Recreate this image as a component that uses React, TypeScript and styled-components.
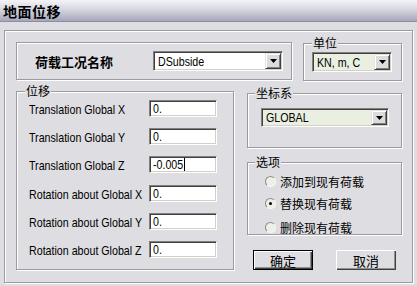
import React from "react";
import styled, { createGlobalStyle, css } from "styled-components";

const BG = "#dedee2";
const SANS = `"Liberation Sans", Arial, sans-serif`;
const CJK = `"Noto Sans CJK SC", "Liberation Sans", sans-serif`;

const Global = createGlobalStyle`
  html, body { margin: 0; padding: 0; background: ${BG}; }
  body { width: 417px; height: 286px; overflow: hidden; }
  #root { width: 417px; height: 286px; }
`;

const etched = css`
  box-sizing: border-box;
  border: 1px solid #9a9aa2;
  box-shadow: inset 1px 1px 0 #ffffff, 1px 1px 0 #ffffff;
`;

const Window = styled.div`
  width: 417px;
  height: 286px;
  background: ${BG};
  display: flex;
  flex-direction: column;
`;

const TitleBar = styled.div`
  height: 21px;
  border-bottom: 1px solid #8e8ea2;
  background: linear-gradient(#f4f4f8 0%, #d6d6e0 45%, #a6a6ba 100%);
  display: flex;
  align-items: center;
  padding-left: 3px;
  font-family: ${CJK};
  font-weight: 700;
  font-size: 14px;
  letter-spacing: 0.5px;
  color: #000;
`;

const Frame = styled.div`
  ${etched};
  margin: 8px 4px 0 4px;
  height: 253px;
  padding: 11px 10px 0 11px;
  display: flex;
  flex-direction: column;
`;

const TopRow = styled.div`
  display: flex;
  gap: 11px;
`;

const Box = styled.div<{ $w?: number; $h: number; $mt?: number }>`
  ${etched};
  position: relative;
  width: ${(p) => (p.$w ? `${p.$w}px` : "auto")};
  flex: ${(p) => (p.$w ? "none" : "1")};
  height: ${(p) => p.$h}px;
  margin-top: ${(p) => p.$mt ?? 0}px;
`;

const Legend = styled.span<{ $left?: number }>`
  position: absolute;
  top: -8px;
  left: ${(p) => p.$left ?? 7}px;
  padding: 0 1px;
  background: ${BG};
  font-family: ${CJK};
  font-size: 12px;
  line-height: 14px;
  color: #000;
`;

const CaseBox = styled(Box)`
  display: flex;
  align-items: center;
  padding: 0 8px 0 18px;
`;

const CaseLabel = styled.span`
  font-family: ${CJK};
  font-weight: 700;
  font-size: 13px;
  color: #000;
`;

/* Condensed Latin text (the dialog uses a narrow sans) */
const Narrow = styled.span`
  display: inline-block;
  font-family: ${SANS};
  font-size: 13px;
  line-height: 15px;
  color: #000;
  white-space: nowrap;
  transform: scaleX(0.82);
  transform-origin: 0 50%;
`;

const Select = styled.div<{ $w: number; $h: number; $bg: string; $ml?: string }>`
  box-sizing: border-box;
  width: ${(p) => p.$w}px;
  height: ${(p) => p.$h}px;
  margin-left: ${(p) => p.$ml ?? "0"};
  display: flex;
  align-items: center;
  padding: 1px;
  background: ${(p) => p.$bg};
  border: 1px solid;
  border-color: #808080 #ffffff #ffffff #808080;
  box-shadow: inset 1px 1px 0 #404040, inset -1px -1px 0 #d4d0c8;
`;

const SelectText = styled.span`
  flex: 1;
  min-width: 0;
  padding-left: 3px;
  display: flex;
  align-items: center;
`;

const ArrowButton = styled.span`
  box-sizing: border-box;
  width: 16px;
  height: 100%;
  display: flex;
  align-items: center;
  justify-content: center;
  background: #dcdcdc;
  border: 1px solid;
  border-color: #e4e4e4 #404040 #404040 #e4e4e4;
  box-shadow: inset 1px 1px 0 #ffffff, inset -1px -1px 0 #808080;
`;

const UnitBox = styled(Box)`
  padding: 8px 0 0 8px;
`;

const MainRow = styled.div`
  display: flex;
  gap: 13px;
  margin-top: 10px;
`;

const DispBox = styled(Box)`
  padding: 8px 0 0 12px;
  display: grid;
  grid-template-columns: 120px 68px;
  grid-auto-rows: 17px;
  row-gap: 11.2px;
  align-content: start;
`;

const FieldLabel = styled.span`
  display: flex;
  align-items: center;
  height: 17px;
  padding-top: 2px;
  box-sizing: border-box;
  overflow: visible;
`;

const Input = styled.div`
  box-sizing: border-box;
  height: 17px;
  display: flex;
  align-items: center;
  padding-left: 3px;
  background: #ffffff;
  border: 1px solid;
  border-color: #808080 #ffffff #ffffff #808080;
  box-shadow: inset 1px 1px 0 #404040, inset -1px -1px 0 #d4d0c8;
`;

const Caret = styled.span`
  display: inline-block;
  width: 1px;
  height: 13px;
  background: #000;
  margin-left: -6px;
`;

const RightCol = styled.div`
  width: 155px;
  display: flex;
  flex-direction: column;
`;

const CoordBox = styled(Box)`
  padding: 14px 0 0 13px;
`;

const OptionBox = styled(Box)`
  display: flex;
  flex-direction: column;
  padding-left: 17px;
`;

const RadioRow = styled.div<{ $mt: number }>`
  display: flex;
  align-items: center;
  height: 14px;
  gap: 4px;
  margin-top: ${(p) => p.$mt}px;
  font-family: ${CJK};
  font-size: 12px;
  color: #000;
`;

const RadioCircle = styled.span<{ $on?: boolean }>`
  box-sizing: border-box;
  width: 11px;
  height: 11px;
  border-radius: 50%;
  border: 1px solid;
  border-color: #8c8c8c #f6f6f6 #f6f6f6 #8c8c8c;
  background: #eef0e6;
  display: flex;
  align-items: center;
  justify-content: center;
  &::after {
    content: "";
    display: ${(p) => (p.$on ? "block" : "none")};
    width: 3px;
    height: 3px;
    border-radius: 50%;
    background: #000;
  }
`;

const ButtonRow = styled.div`
  display: flex;
  justify-content: space-between;
  padding: 0 6px;
  margin-top: 15px;
`;

const Button = styled.button<{ $default?: boolean }>`
  box-sizing: border-box;
  width: 60px;
  height: 20px;
  padding: 0;
  background: ${BG};
  font-family: ${CJK};
  font-size: 13px;
  color: #000;
  border: ${(p) => (p.$default ? "1px solid #000" : "none")};
  box-shadow: inset 1px 1px 0 #ffffff, inset -1px -1px 0 #404040,
    inset -2px -2px 0 #909090;
  cursor: default;
`;

const Arrow = () => (
  <svg width="7" height="4" viewBox="0 0 7 4">
    <polygon points="0,0 7,0 3.5,4" fill="#000" />
  </svg>
);

const rows: { label: string; value: string; caret?: boolean }[] = [
  { label: "Translation Global X", value: "0." },
  { label: "Translation Global Y", value: "0." },
  { label: "Translation Global Z", value: "-0.005", caret: true },
  { label: "Rotation about Global X", value: "0." },
  { label: "Rotation about Global Y", value: "0." },
  { label: "Rotation about Global Z", value: "0." },
];

export default function App() {
  return (
    <Window>
      <Global />
      <TitleBar>地面位移</TitleBar>
      <Frame>
        <TopRow>
          <CaseBox $h={38}>
            <CaseLabel>荷载工况名称</CaseLabel>
            <Select $w={130} $h={20} $bg="#ffffff" $ml="auto">
              <SelectText>
                <Narrow>DSubside</Narrow>
              </SelectText>
              <ArrowButton>
                <Arrow />
              </ArrowButton>
            </Select>
          </CaseBox>
          <UnitBox $w={99} $h={38} $mt={1}>
            <Legend $left={8}>单位</Legend>
            <Select $w={80} $h={20} $bg="#e9efe1">
              <SelectText>
                <Narrow>KN, m, C</Narrow>
              </SelectText>
              <ArrowButton>
                <Arrow />
              </ArrowButton>
            </Select>
          </UnitBox>
        </TopRow>
        <MainRow>
          <DispBox $w={218} $h={179}>
            <Legend $left={8}>位移</Legend>
            {rows.map((r) => (
              <React.Fragment key={r.label}>
                <FieldLabel>
                  <Narrow>{r.label}</Narrow>
                </FieldLabel>
                <Input>
                  <Narrow>{r.value}</Narrow>
                  {r.caret && <Caret />}
                </Input>
              </React.Fragment>
            ))}
          </DispBox>
          <RightCol>
            <CoordBox $h={49} $mt={2}>
              <Legend $left={7}>坐标系</Legend>
              <Select $w={128} $h={19} $bg="#e9efe1">
                <SelectText>
                  <Narrow>GLOBAL</Narrow>
                </SelectText>
                <ArrowButton>
                  <Arrow />
                </ArrowButton>
              </Select>
            </CoordBox>
            <OptionBox $h={77} $mt={14}>
              <Legend $left={7}>选项</Legend>
              <RadioRow $mt={11}>
                <RadioCircle />
                添加到现有荷载
              </RadioRow>
              <RadioRow $mt={8}>
                <RadioCircle $on />
                替换现有荷载
              </RadioRow>
              <RadioRow $mt={10}>
                <RadioCircle />
                删除现有荷载
              </RadioRow>
            </OptionBox>
            <ButtonRow>
              <Button $default>确定</Button>
              <Button>取消</Button>
            </ButtonRow>
          </RightCol>
        </MainRow>
      </Frame>
    </Window>
  );
}
